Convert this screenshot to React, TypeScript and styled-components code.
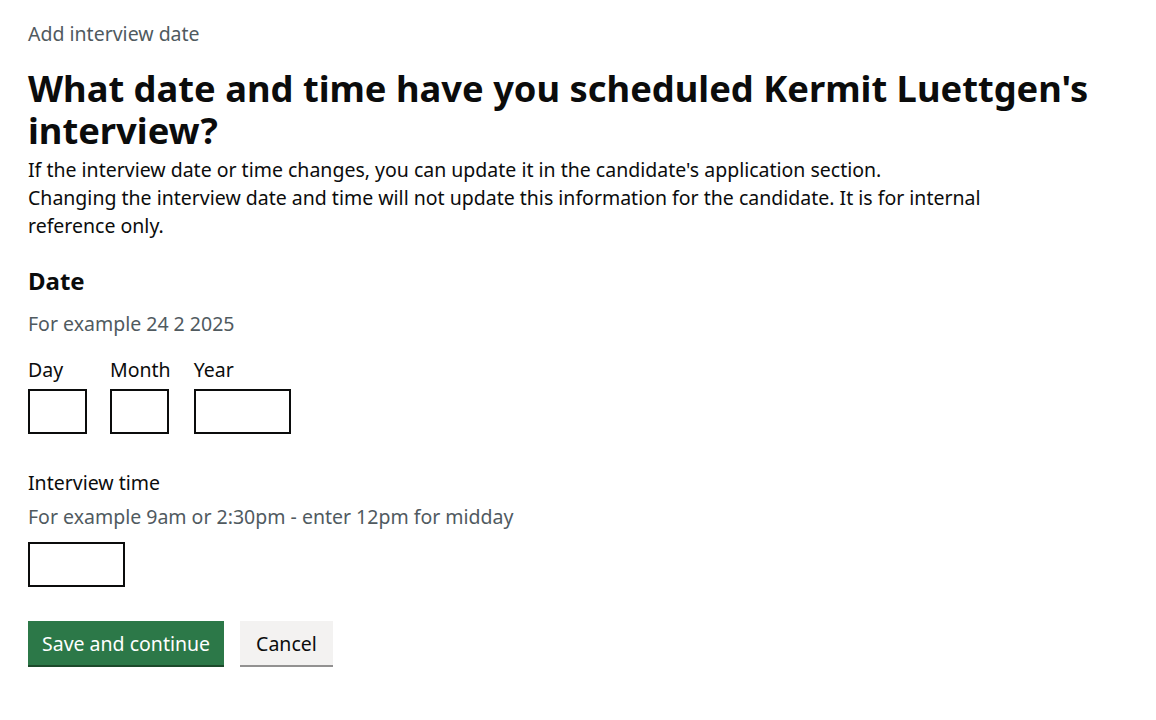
import React from 'react';
import styled, { createGlobalStyle } from 'styled-components';

const GlobalStyle = createGlobalStyle`
  html, body {
    margin: 0;
    padding: 0;
    background: #ffffff;
  }
  body {
    font-family: "Noto Sans", Arial, sans-serif;
    color: #0b0c0c;
  }
`;

const Page = styled.main`
  padding: 22px 28px 40px;
  width: 1100px;
`;

const Caption = styled.span`
  display: block;
  font-size: 19.5px;
  line-height: 24px;
  color: #505a5f;
  margin-bottom: 21px;
`;

const Heading = styled.h1`
  margin: 0 0 5px;
  font-size: 36.3px;
  line-height: 42px;
  font-weight: 700;
  color: #0b0c0c;
`;

const Body = styled.p`
  margin: 0;
  font-size: 19.5px;
  line-height: 28px;
  color: #0b0c0c;
`;

const Fieldset = styled.fieldset`
  border: 0;
  margin: 27px 0 0;
  padding: 0;
  min-width: 0;
`;

const Legend = styled.legend`
  padding: 0;
  margin: 0 0 17px;
  font-size: 24px;
  line-height: 28px;
  font-weight: 700;
`;

const Hint = styled.div<{ $gap: number }>`
  font-size: 19.5px;
  line-height: 24px;
  color: #505a5f;
  margin-bottom: ${(p) => p.$gap}px;
`;

const DateRow = styled.div`
  display: flex;
  gap: 23px;
`;

const DateItem = styled.div`
  display: flex;
  flex-direction: column;
`;

const SmallLabel = styled.label<{ $gap: number }>`
  font-size: 19.5px;
  line-height: 24px;
  margin-bottom: ${(p) => p.$gap}px;
  color: #0b0c0c;
`;

const TextInput = styled.input<{ $w: number }>`
  box-sizing: border-box;
  width: ${(p) => p.$w}px;
  height: 45px;
  border: 2px solid #0b0c0c;
  border-radius: 0;
  margin: 0;
  padding: 4px;
  font: inherit;
  font-size: 19px;
  background: #fff;
`;

const FormGroup = styled.div`
  margin-top: 37px;
  display: flex;
  flex-direction: column;
  align-items: flex-start;
`;

const ButtonGroup = styled.div`
  display: flex;
  gap: 16px;
  margin-top: 34px;
`;

const Button = styled.button<{ $secondary?: boolean }>`
  box-sizing: border-box;
  height: 44px;
  padding: 0 ${(p) => (p.$secondary ? 16 : 14)}px;
  border: 0;
  border-radius: 0;
  font-family: inherit;
  font-size: 19.5px;
  color: ${(p) => (p.$secondary ? '#0b0c0c' : '#ffffff')};
  background: ${(p) => (p.$secondary ? '#f3f2f1' : '#2c7848')};
  box-shadow: 0 2px 0 ${(p) => (p.$secondary ? '#929191' : '#1c4a2b')};
  cursor: pointer;
`;

export default function App() {
  return (
    <>
      <GlobalStyle />
      <Page>
        <Caption>Add interview date</Caption>
        <Heading>What date and time have you scheduled Kermit Luettgen's interview?</Heading>
        <Body>If the interview date or time changes, you can update it in the candidate's application section.</Body>
        <Body>
          Changing the interview date and time will not update this information for the candidate. It is for internal
          <br />
          reference only.
        </Body>

        <Fieldset>
          <Legend>Date</Legend>
          <Hint $gap={22}>For example 24 2 2025</Hint>
          <DateRow>
            <DateItem>
              <SmallLabel $gap={7}>Day</SmallLabel>
              <TextInput $w={59} />
            </DateItem>
            <DateItem>
              <SmallLabel $gap={7}>Month</SmallLabel>
              <TextInput $w={59} />
            </DateItem>
            <DateItem>
              <SmallLabel $gap={7}>Year</SmallLabel>
              <TextInput $w={97} />
            </DateItem>
          </DateRow>
        </Fieldset>

        <FormGroup>
          <SmallLabel $gap={10}>Interview time</SmallLabel>
          <Hint $gap={13}>For example 9am or 2:30pm - enter 12pm for midday</Hint>
          <TextInput $w={97} />
        </FormGroup>

        <ButtonGroup>
          <Button>Save and continue</Button>
          <Button $secondary>Cancel</Button>
        </ButtonGroup>
      </Page>
    </>
  );
}
